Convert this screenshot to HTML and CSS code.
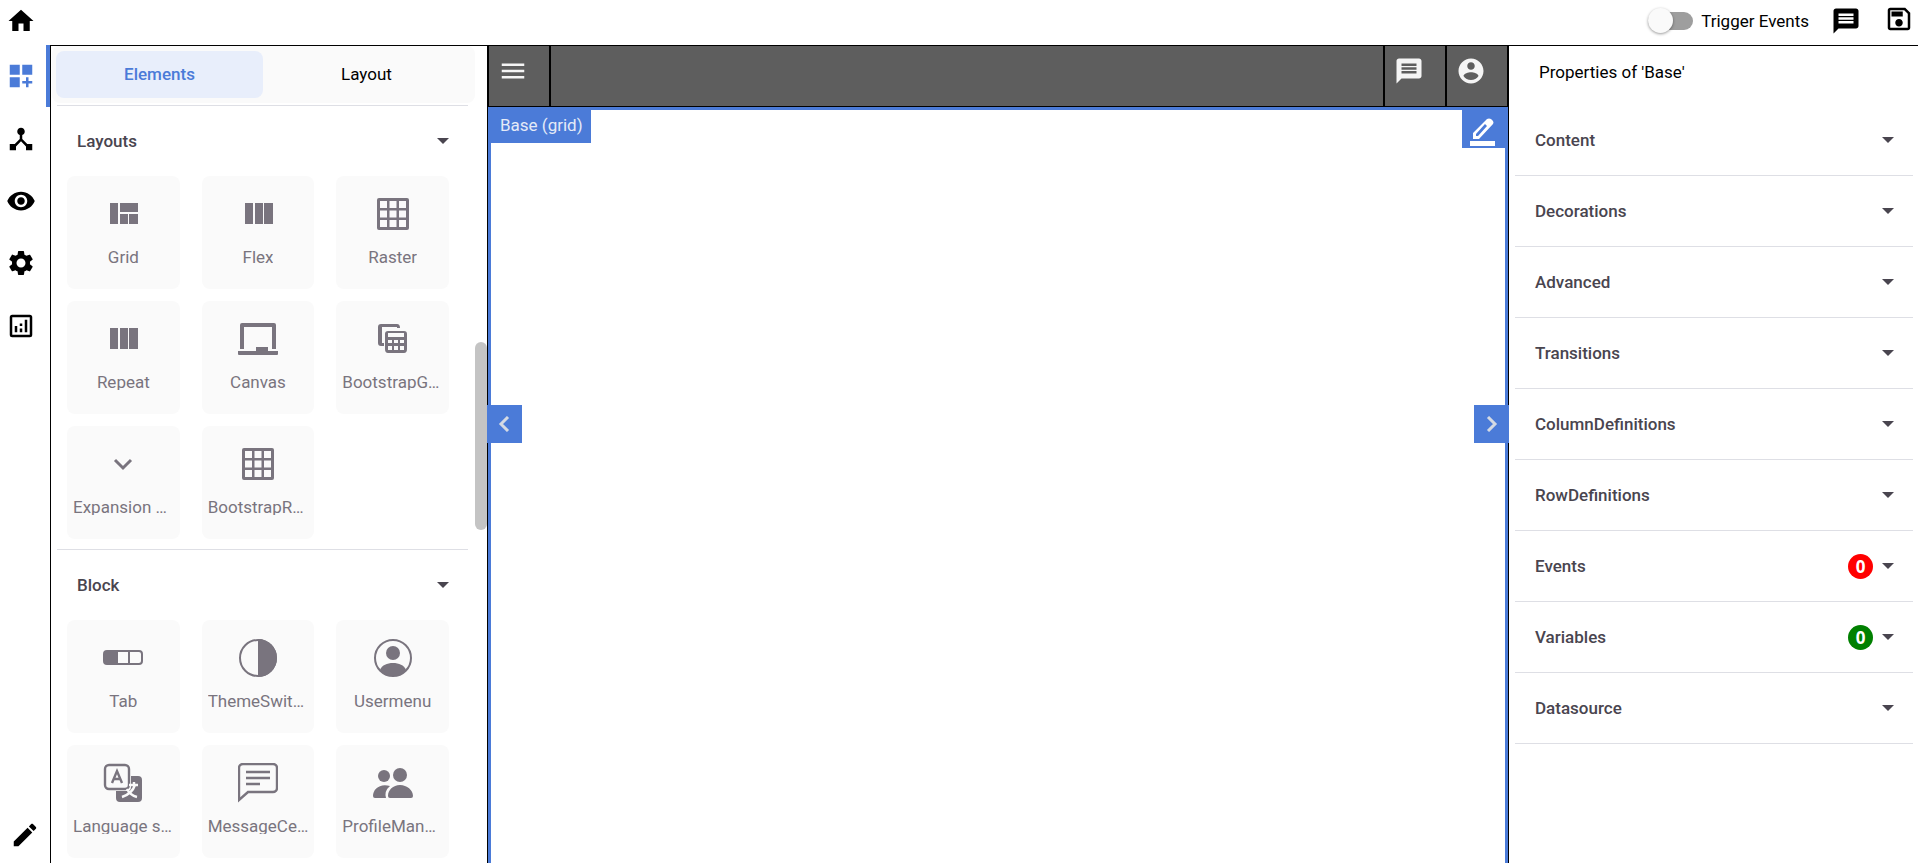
FILE: index.html
```html
<!DOCTYPE html>
<html lang="en">
    <head>
        <meta charset="utf-8">
        <title>Page Designer</title>
        <link rel="stylesheet" href="styles.css">
    </head>
    <body>
        <!-- shared icons -->
        <svg class="sprite" aria-hidden="true">
            <symbol id="message" viewBox="0 0 24 24"><path d="M20 2H4c-1.100 0-1.990.9-1.990 2L2 22l4-4h14c1.100 0 2-.9 2-2V4c0-1.100-.9-2-2-2zm-2 12H6v-2h12v2zm0-3H6V9h12v2zm0-3H6V6h12v2z"/></symbol>
            <symbol id="arrow" viewBox="0 0 12 6"><path d="M0 0h12L6 6z"/></symbol>
            <symbol id="columns" viewBox="0 0 40 40"><path d="M7 9h8v21H7zM17 9h8v21h-8zM26 9h9v21h-9z"/></symbol>
            <symbol id="raster" viewBox="0 0 40 40"><path fill-rule="evenodd" d="M6 4h28a2 2 0 0 1 2 2v28a2 2 0 0 1-2 2H6a2 2 0 0 1-2-2V6a2 2 0 0 1 2-2zM7 7v7h7V7zM16.500 7v7h7V7zM26 7v7h7V7zM7 16.500v7h7v-7zM16.500 16.500v7h7v-7zM26 16.500v7h7v-7zM7 26v7h7v-7zM16.500 26v7h7v-7zM26 26v7h7v-7z"/></symbol>
        </svg>

        <header class="topbar">
            <a href="#" class="home" aria-label="Home"><svg class="icon" viewBox="0 0 24 24"><path d="M10 20v-6h4v6h5v-8h3L12 3 2 12h3v8z"/></svg></a>
            <div class="actions">
                <label class="toggle"><input type="checkbox" id="triggerEvents">Trigger Events</label>
                <button class="iconBtn" aria-label="Messages"><svg class="icon"><use href="#message"/></svg></button>
                <button class="iconBtn save" aria-label="Save"><svg class="icon" viewBox="0 0 24 24"><path d="M17 3H5c-1.110 0-2 .9-2 2v14c0 1.100.89 2 2 2h14c1.100 0 2-.9 2-2V7l-4-4zm2 16H5V5h11.170L19 7.830V19zm-7-7c-1.660 0-3 1.340-3 3s1.340 3 3 3 3-1.340 3-3-1.340-3-3-3zM6 6h9v4H6z"/></svg></button>
            </div>
        </header>

        <div class="workspace">
            <nav class="sidebar">
                <div class="navItems">
                    <a href="#" class="active" aria-label="Elements"><svg class="icon" viewBox="0 0 24 24"><path d="M3 3h8v8H3zM13 3h8v8h-8zM3 13h8v8H3zM18 13h-2v3h-3v2h3v3h2v-3h3v-2h-3z"/></svg></a>
                    <a href="#" aria-label="Structure"><svg class="icon" viewBox="0 0 24 24"><path d="M17 16l-4-4V8.820C14.160 8.400 15 7.300 15 6c0-1.660-1.340-3-3-3S9 4.340 9 6c0 1.300.84 2.400 2 2.820V12l-4 4H3v5h5v-3.050l4-4.200 4 4.200V21h5v-5h-4z"/></svg></a>
                    <a href="#" aria-label="Preview"><svg class="icon" viewBox="0 0 24 24"><path d="M12 4.500C7 4.500 2.730 7.610 1 12c1.730 4.390 6 7.500 11 7.500s9.270-3.110 11-7.500c-1.730-4.390-6-7.500-11-7.500zM12 17c-2.760 0-5-2.240-5-5s2.240-5 5-5 5 2.240 5 5-2.240 5-5 5zm0-8c-1.660 0-3 1.340-3 3s1.340 3 3 3 3-1.340 3-3-1.340-3-3-3z"/></svg></a>
                    <a href="#" aria-label="Settings"><svg class="icon" viewBox="0 0 24 24"><path d="M19.140 12.940c.04-.3.06-.61.06-.94 0-.32-.02-.64-.07-.94l2.030-1.580c.18-.14.23-.41.12-.61l-1.920-3.320c-.12-.22-.37-.29-.59-.22l-2.390.96c-.5-.38-1.030-.7-1.620-.94l-.36-2.540c-.04-.24-.24-.41-.48-.41h-3.840c-.24 0-.43.17-.47.41l-.36 2.540c-.59.24-1.130.57-1.620.94l-2.390-.96c-.22-.08-.47 0-.59.22L2.740 8.870c-.12.21-.08.47.12.61l2.030 1.580c-.05.3-.09.63-.09.94s.02.64.07.94l-2.030 1.580c-.18.14-.23.41-.12.61l1.920 3.320c.12.22.37.29.59.22l2.390-.96c.5.38 1.030.7 1.620.94l.36 2.540c.05.24.24.41.48.41h3.840c.24 0 .44-.17.47-.41l.36-2.540c.59-.24 1.130-.56 1.620-.94l2.390.96c.22.08.47 0 .59-.22l1.920-3.320c.12-.22.07-.47-.12-.61l-2.010-1.580zM12 15.600c-1.980 0-3.600-1.620-3.600-3.600s1.620-3.600 3.600-3.600 3.600 1.620 3.600 3.600-1.620 3.600-3.600 3.600z"/></svg></a>
                    <a href="#" aria-label="Analytics"><svg class="icon" viewBox="0 0 24 24"><path fill-rule="evenodd" d="M19 3H5a2 2 0 0 0-2 2v14a2 2 0 0 0 2 2h14a2 2 0 0 0 2-2V5a2 2 0 0 0-2-2zM5 5h14v14H5zM7 12h2v5H7zM15 7h2v10h-2zM11 14h2v3h-2zM11 10h2v2h-2z"/></svg></a>
                </div>
                <button class="iconBtn edit" aria-label="Edit"><svg class="icon" viewBox="0 0 24 24"><path d="M3 17.250V21h3.750L17.810 9.940l-3.750-3.750L3 17.250zM20.710 7.040c.39-.39.39-1.020 0-1.410l-2.340-2.340c-.39-.39-1.020-.39-1.410 0l-1.830 1.830 3.750 3.750 1.830-1.830z"/></svg></button>
            </nav>

            <aside class="elements">
                <div class="tabs">
                    <button class="tab selected">Elements</button>
                    <button class="tab">Layout</button>
                </div>
                <section class="group">
                    <button class="groupHead">Layouts <svg class="arrow"><use href="#arrow"/></svg></button>
                    <div class="cards">
                        <button class="card"><svg viewBox="0 0 40 40"><path d="M7 9h8v21H7zM17 9h18v9H17zM17 20h8v10h-8zM26 20h9v10h-9z"/></svg><span>Grid</span></button>
                        <button class="card"><svg><use href="#columns"/></svg><span>Flex</span></button>
                        <button class="card"><svg><use href="#raster"/></svg><span>Raster</span></button>
                        <button class="card"><svg><use href="#columns"/></svg><span>Repeat</span></button>
                        <button class="card"><svg viewBox="0 0 40 40"><path d="M2 28V6a2 2 0 0 1 2-2h32a2 2 0 0 1 2 2v24h-4V8H6v22H2zM0 32h18v-4h12v4h10v3a1 1 0 0 1-1 1H1a1 1 0 0 1-1-1z"/></svg><span>Canvas</span></button>
                        <button class="card"><svg viewBox="0 0 40 40"><path fill-rule="evenodd" d="M8 5h16q3 0 3 4h-3V8H9v16h2v3H8q-3 0-3-3V8q0-3 3-3zM15 12h16q3 0 3 3v15q0 4-3 4H15q-3 0-3-4V15q0-3 3-3zM15 14v4h16v-4zM15 21v3h4v-3zM21 21v3h4v-3zM27 21v3h4v-3zM15 27v4h4v-4zM21 27v4h4v-4zM27 27v4h4v-4z"/></svg><span>BootstrapGrid</span></button>
                        <button class="card"><svg viewBox="0 0 40 40"><path class="line thick" d="M12 16l8 8 8-8"/></svg><span>Expansion Panel</span></button>
                        <button class="card"><svg><use href="#raster"/></svg><span>BootstrapRow</span></button>
                    </div>
                </section>
                <section class="group">
                    <button class="groupHead">Block <svg class="arrow"><use href="#arrow"/></svg></button>
                    <div class="cards">
                        <button class="card"><svg viewBox="0 0 40 40"><rect class="line" x="1" y="13" width="38" height="13" rx="3"/><path d="M2 13h13v13H2zM25 13h2v13h-2z"/></svg><span>Tab</span></button>
                        <button class="card"><svg viewBox="0 0 40 40"><circle class="line" cx="20" cy="20" r="18"/><path d="M20 1a19 19 0 0 1 0 38z"/></svg><span>ThemeSwitcher</span></button>
                        <button class="card"><svg viewBox="0 0 40 40"><circle class="line" cx="20" cy="20" r="18"/><circle cx="20" cy="15" r="7"/><path d="M7 32c2-5 7-7 13-7s11 2 13 7c-7 8-19 8-26 0z"/></svg><span>Usermenu</span></button>
                        <button class="card"><svg viewBox="0 0 40 40"><rect class="line bold" x="2" y="2" width="24" height="24" rx="4"/><path d="M28 13h7a4 4 0 0 1 4 4v18a4 4 0 0 1-4 4H17a4 4 0 0 1-4-4v-7h11q4 0 4-4z"/><path class="line bold" d="M9 20l5-12 5 12M10 16h8"/><path class="line bold cut" d="M26 22h9M31 19v3M32 22c-2 6-7 10-13 12M24 26c2 4 6 7 10 8"/></svg><span>Language selector</span></button>
                        <button class="card"><svg viewBox="0 0 40 40"><path class="line bold" d="M1 37V5a4 4 0 0 1 4-4h30a4 4 0 0 1 4 4v20a4 4 0 0 1-4 4H10zM8 9h24M8 15h24M8 21h14"/></svg><span>MessageCenter</span></button>
                        <button class="card"><svg viewBox="0 0 40 40"><circle cx="11" cy="13" r="6"/><circle cx="27" cy="12" r="7"/><path d="M17 23C7 20 0 26 0 33q0 2 2 2h11q-2-7 4-12zM17 35q-2 0-2-2c0-6 5-11 12-11s13 5 13 11q0 2-2 2z"/></svg><span>ProfileManager</span></button>
                    </div>
                </section>
                <div class="scrollThumb"></div>
            </aside>

            <main class="stage">
                <div class="appBar">
                    <button class="cell" aria-label="Menu"><svg class="icon" viewBox="0 0 24 24"><path d="M3 18h18v-2H3v2zm0-5h18v-2H3v2zm0-7v2h18V6H3z"/></svg></button>
                    <div class="cell spacer"></div>
                    <button class="cell" aria-label="Messages"><svg class="icon"><use href="#message"/></svg></button>
                    <button class="cell" aria-label="Account"><svg class="icon" viewBox="0 0 24 24"><path d="M12 2C6.480 2 2 6.480 2 12s4.480 10 10 10 10-4.480 10-10S17.520 2 12 2zm0 3c1.660 0 3 1.340 3 3s-1.340 3-3 3-3-1.340-3-3 1.340-3 3-3zm0 14.200c-2.500 0-4.710-1.280-6-3.220.03-1.990 4-3.080 6-3.080 1.990 0 5.970 1.090 6 3.080-1.290 1.940-3.500 3.220-6 3.220z"/></svg></button>
                </div>
                <div class="canvas">
                    <span class="canvasName">Base (grid)</span>
                    <button class="canvasEdit" aria-label="Edit base"><svg viewBox="0 0 30 30"><path fill-rule="evenodd" d="M5 23v-6L19 3q2-1 4 0l2 2q1 2 0 3L11 23zM8 20h2l9-10-2-2-9 10zM2 25h25v5H2z"/></svg></button>
                    <button class="slide prev" aria-label="Previous"><svg viewBox="0 0 16 16"><path class="line thick" d="M11 1L4 8l7 7"/></svg></button>
                    <button class="slide next" aria-label="Next"><svg viewBox="0 0 16 16"><path class="line thick" d="M4 1l7 7-7 7"/></svg></button>
                </div>
            </main>

            <aside class="properties">
                <h1>Properties of 'Base'</h1>
                <button class="prop">Content <svg class="arrow"><use href="#arrow"/></svg></button>
                <button class="prop">Decorations <svg class="arrow"><use href="#arrow"/></svg></button>
                <button class="prop">Advanced <svg class="arrow"><use href="#arrow"/></svg></button>
                <button class="prop">Transitions <svg class="arrow"><use href="#arrow"/></svg></button>
                <button class="prop">ColumnDefinitions <svg class="arrow"><use href="#arrow"/></svg></button>
                <button class="prop">RowDefinitions <svg class="arrow"><use href="#arrow"/></svg></button>
                <button class="prop">Events <span class="badge red">0</span><svg class="arrow"><use href="#arrow"/></svg></button>
                <button class="prop">Variables <span class="badge green">0</span><svg class="arrow"><use href="#arrow"/></svg></button>
                <button class="prop">Datasource <svg class="arrow"><use href="#arrow"/></svg></button>
            </aside>
        </div>
    </body>
</html>
```
FILE: styles.css
```css
*{
    box-sizing: border-box;
}

body{
    margin: 0;
    height: 100vh;
    display: flex;
    flex-direction: column;
    overflow: hidden;
    background-color: white;
    color: black;
    font-family: Roboto, sans-serif;
    font-size: 17px;
}

button{
    font: inherit;
    color: inherit;
    background: none;
    border: none;
    padding: 0;
    cursor: pointer;
}

a{
    color: inherit;
}

svg{
    display: block;
    fill: currentColor;
    flex-shrink: 0;
}

.sprite{
    position: absolute;
    width: 0;
    height: 0;
}

.icon{
    width: 30px;
    height: 30px;
}

.line{
    fill: none;
    stroke: currentColor;
    stroke-width: 2;
}

.bold{
    stroke-width: 2.4;
}

.thick{
    stroke-width: 3;
}

.cut{
    stroke: #fafafa;
}

/* top bar */

.topbar{
    display: flex;
    justify-content: space-between;
    height: 45px;
    padding: 6px 4px 0 6px;
    flex-shrink: 0;
}

.actions{
    display: flex;
    align-items: flex-start;
}

.toggle{
    display: flex;
    align-items: center;
    height: 30px;
    gap: 8px;
    margin-right: 22px;
}

.toggle input{
    appearance: none;
    position: relative;
    width: 45px;
    height: 18px;
    margin: 0;
    border-radius: 9px;
    background-color: #9e9e9e;
}

.toggle input::before{
    content: "";
    position: absolute;
    left: 0;
    top: -4px;
    width: 25px;
    height: 25px;
    border-radius: 50%;
    background-color: #fafafa;
    box-shadow: 0 1px 3px rgba(0, 0, 0, 0.4);
}

.toggle input:checked::before{
    left: 20px;
}

.save{
    margin-left: 23px;
    margin-top: -2px;
}

/* columns under the top bar */

.workspace{
    flex: 1;
    min-height: 0;
    display: flex;
}

.sidebar{
    width: 50px;
    display: flex;
    flex-direction: column;
    justify-content: space-between;
    padding-bottom: 13px;
    flex-shrink: 0;
}

.navItems{
    display: flex;
    flex-direction: column;
    height: 312px;
}

.navItems a{
    flex: 1;
    display: flex;
    align-items: center;
    padding-left: 6px;
    border-right: 4px solid transparent;
}

.navItems .active{
    color: #4b7bd8;
    border-right-color: #4b7bd8;
}

.edit{
    margin-left: 10px;
    width: 30px;
}

/* element list */

.elements{
    position: relative;
    width: 438px;
    border: 1px solid black;
    border-bottom: none;
    padding: 0 12px 0 1px;
    overflow: hidden;
    flex-shrink: 0;
}

.tabs{
    display: flex;
    background-color: #fafafa;
    border-radius: 8px;
    padding: 5px 5px 5px 4px;
    height: 57px;
}

.tab{
    flex: 1;
    border-radius: 8px;
    padding-bottom: 1px;
}

.selected{
    background-color: #e8eefb;
    color: #4b7bd8;
    font-weight: 500;
}

.group{
    margin: 0 7px 0 5px;
    padding-bottom: 10px;
    border-bottom: 1px solid #dedfe5;
}

.tabs + .group{
    margin-top: 2px;
    border-top: 1px solid #dedfe5;
}

.groupHead, .prop{
    display: flex;
    align-items: center;
    width: 100%;
    height: 70px;
    padding: 0 19px 0 20px;
    color: #49454f;
    font-weight: 500;
    text-align: left;
}

.arrow{
    width: 12px;
    height: 6px;
    margin-left: auto;
}

.cards{
    display: grid;
    grid-template-columns: repeat(3, 1fr);
    gap: 12px 22px;
    padding: 0 19px 0 10px;
}

.card{
    display: flex;
    flex-direction: column;
    align-items: center;
    height: 113px;
    min-width: 0;
    padding: 18px 6px 0;
    border-radius: 8px;
    background-color: #fafafa;
    color: #79747e;
}

.card svg{
    width: 40px;
    height: 40px;
    margin-bottom: 15px;
}

.card span{
    max-width: 100%;
    line-height: 16px;
    overflow: hidden;
    text-overflow: ellipsis;
    white-space: nowrap;
}

.groupHead{
    padding-bottom: 1px;
}

.scrollThumb{
    position: absolute;
    right: 0;
    top: 296px;
    width: 12px;
    height: 188px;
    border-radius: 6px;
    background-color: #c4c4c4;
}

/* page being edited */

.stage{
    flex: 1;
    min-width: 0;
    display: flex;
    flex-direction: column;
}

.appBar{
    display: flex;
    height: 62px;
    flex-shrink: 0;
}

.cell{
    width: 62px;
    border: 1px solid black;
    background-color: #5e5e5e;
    color: #f5f5f5;
    display: flex;
    padding: 10px 0 0 9px;
}

.spacer{
    flex: 1;
}

.canvas{
    position: relative;
    flex: 1;
    border: 3px solid #4b7bd8;
    border-bottom: none;
}

.canvasName{
    position: absolute;
    left: -3px;
    top: -3px;
    padding: 1px 8px 0 12px;
    line-height: 35px;
    background-color: #4b7bd8;
    color: #e4eaf7;
}

.canvasEdit{
    position: absolute;
    right: -3px;
    top: -3px;
    width: 46px;
    height: 41px;
    padding: 7px 0 0 6px;
    background-color: #4b7bd8;
    color: white;
}

.canvasEdit svg{
    width: 30px;
    height: 30px;
}

.slide{
    position: absolute;
    top: calc(42% - 21px);
    width: 35px;
    height: 38px;
    background-color: #4b7bd8;
    color: #d5dae3;
    display: flex;
    align-items: center;
    justify-content: center;
}

.slide svg{
    width: 16px;
    height: 16px;
}

.prev{
    left: -4px;
}

.next{
    right: -4px;
}

/* properties */

.properties{
    width: 410px;
    border-left: 1px solid black;
    border-top: 1px solid black;
    padding: 0 5px 0 6px;
    flex-shrink: 0;
}

.properties h1{
    margin: 0;
    padding-left: 24px;
    height: 59px;
    line-height: 52px;
    font-size: 17px;
    font-weight: 400;
}

.prop{
    height: 71px;
    border-bottom: 1px solid #dedfe5;
}

.badge{
    margin-left: auto;
    width: 25px;
    line-height: 25px;
    border-radius: 50%;
    color: white;
    font-family: "Open Sans", sans-serif;
    font-weight: 700;
    text-align: center;
}

.badge + .arrow{
    margin-left: 9px;
}

.red{
    background-color: red;
}

.green{
    background-color: green;
}
```
